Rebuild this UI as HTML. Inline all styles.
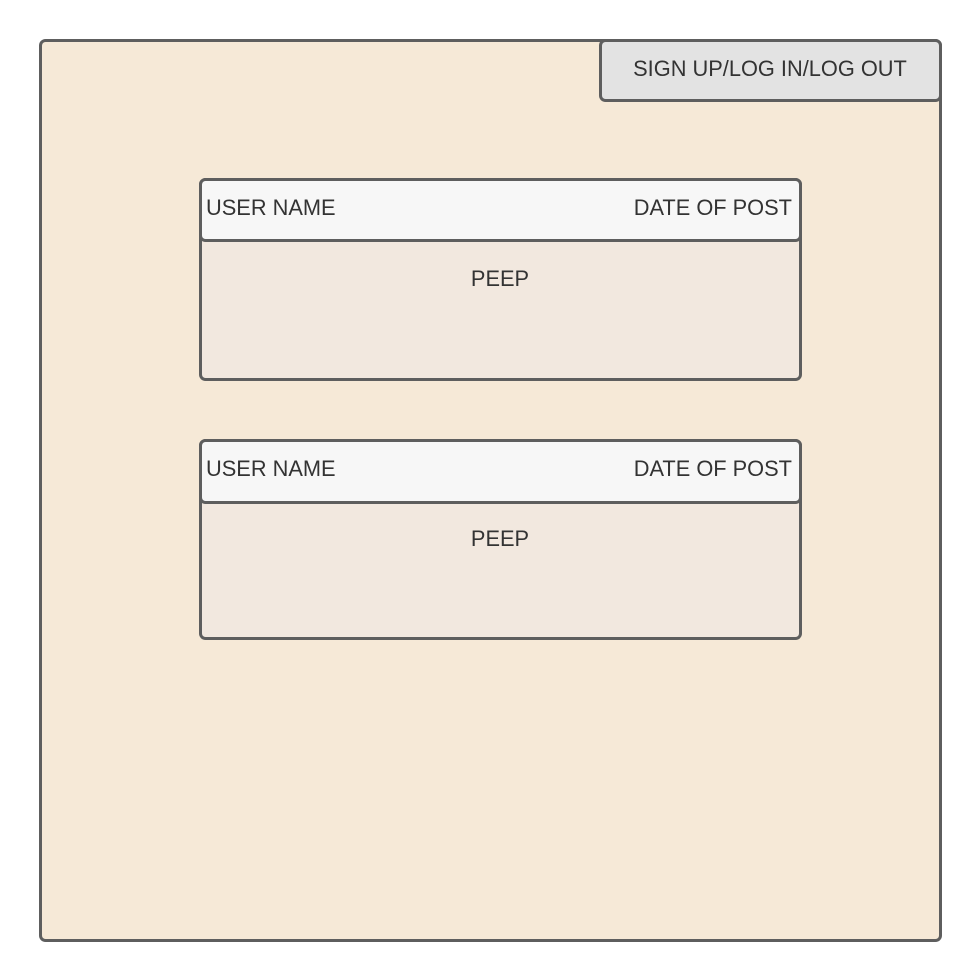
<!DOCTYPE html>
<html><head><style>
html,body{margin:0;padding:0;background:#fff;width:980px;height:980px;overflow:hidden}
text{font-family:"Liberation Sans",Arial,sans-serif;font-size:21.8px;fill:#333}
</style></head><body>
<svg width="980" height="980" viewBox="0 0 980 980" xmlns="http://www.w3.org/2000/svg">
<rect x="40.5" y="40.5" width="900" height="900" rx="5" fill="#f6e9d7" stroke="#5e5e5e" stroke-width="3"/>
<rect x="600.5" y="40.5" width="340" height="60" rx="5" fill="#e3e3e3" stroke="#5e5e5e" stroke-width="3"/>
<text x="770" y="76" text-anchor="middle">SIGN UP/LOG IN/LOG OUT</text>

<rect x="200.5" y="179.5" width="600" height="200" rx="5" fill="#f2e8df" stroke="#5e5e5e" stroke-width="3"/>
<rect x="200.5" y="179.5" width="600" height="61" rx="5" fill="#f7f7f7" stroke="#5e5e5e" stroke-width="3"/>
<text x="206" y="215">USER NAME</text>
<text x="792" y="215" text-anchor="end">DATE OF POST</text>
<text x="500" y="286" text-anchor="middle">PEEP</text>

<rect x="200.5" y="440.5" width="600" height="198" rx="5" fill="#f2e8df" stroke="#5e5e5e" stroke-width="3"/>
<rect x="200.5" y="440.5" width="600" height="62" rx="5" fill="#f7f7f7" stroke="#5e5e5e" stroke-width="3"/>
<text x="206" y="476">USER NAME</text>
<text x="792" y="476" text-anchor="end">DATE OF POST</text>
<text x="500" y="546" text-anchor="middle">PEEP</text>
</svg>
</body></html>
